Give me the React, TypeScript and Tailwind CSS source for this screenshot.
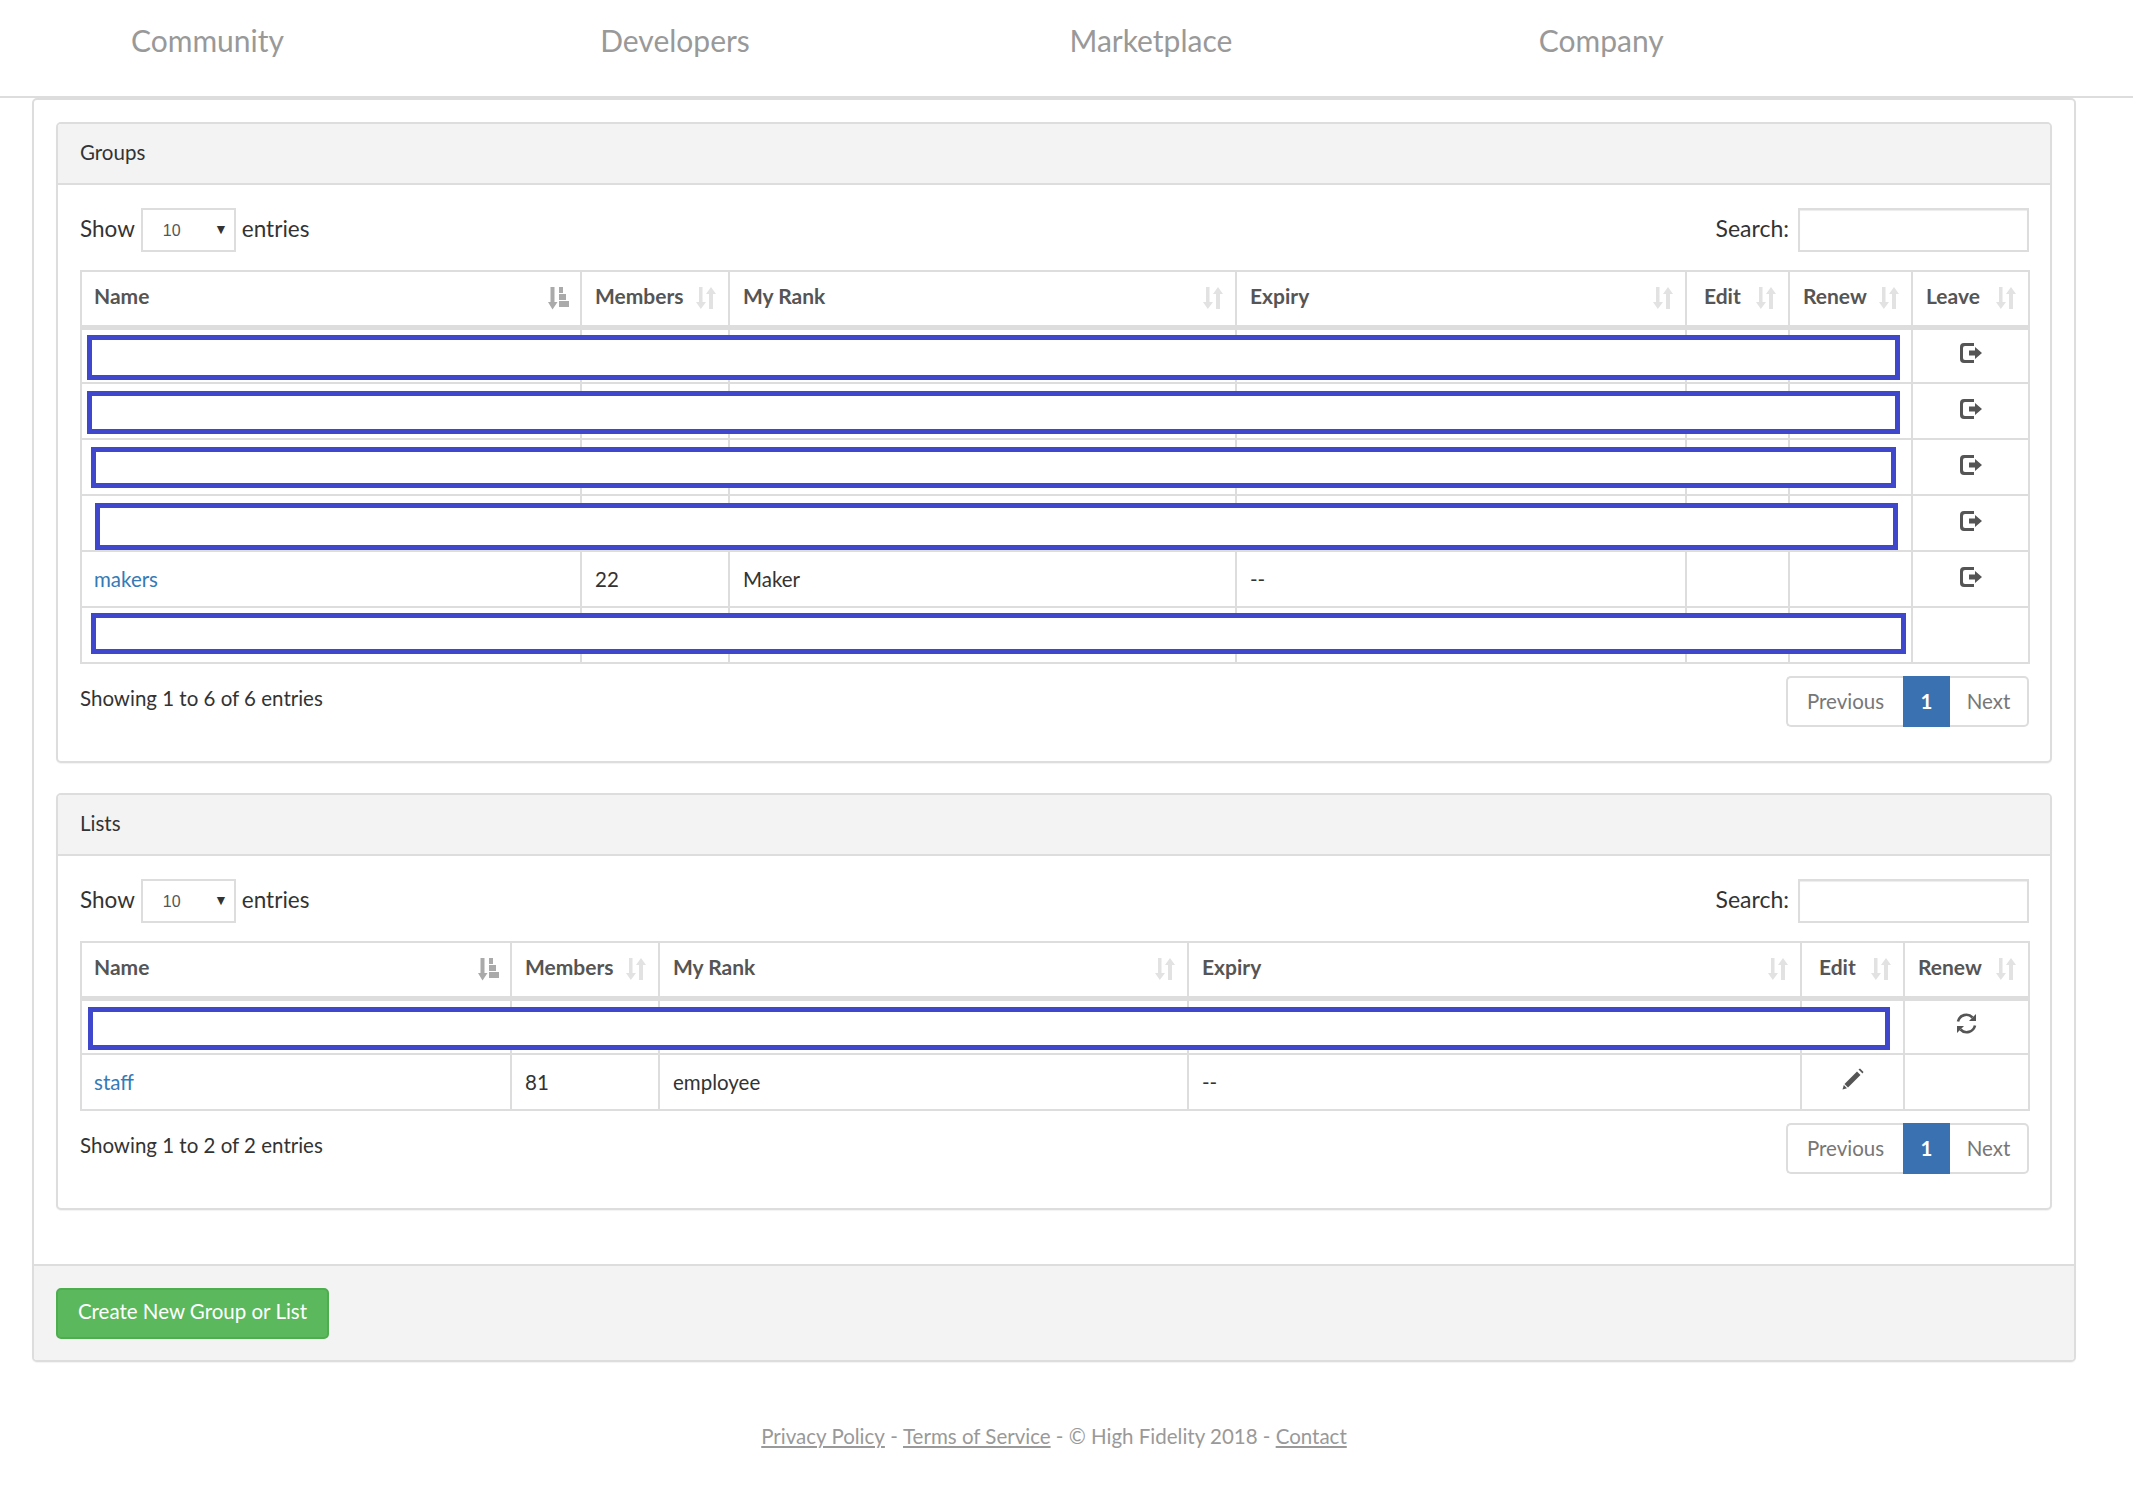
import React from "react";

const font = "font-['Lato','Open_Sans',sans-serif]";

function SortIcon({ active = false }: { active?: boolean }) {
  if (active) {
    return (
      <svg width="22" height="23" viewBox="0 0 22 23" className="-mr-[2px] shrink-0 text-[#aaaaaa]" fill="currentColor">
        <path d="M2.500 0h4v15H9.500l-5 7.500L0 15h2.500z" />
        <path d="M11 0h4v6h-4zM11 7h7v6h-7zM11 14h10v6H11z" />
      </svg>
    );
  }
  return (
    <svg width="20" height="23" viewBox="0 0 20 23" className="shrink-0 text-[#e2e2e2]" fill="currentColor">
      <path d="M3 0h3.500v15H10l-5.200 7L0 15h3z" />
      <path d="M13 22V7H10l5-7 5 7h-3v15z" />
    </svg>
  );
}

function LeaveIcon() {
  return (
    <svg width="23" height="20" viewBox="0 0 23 20" className="mx-auto translate-x-[1px] text-[#555555]" fill="currentColor">
      <path d="M4 0H14v3H5A2 2 0 0 0 3 5v10a2 2 0 0 0 2 2H14v3H4A4 4 0 0 1 0 16V4A4 4 0 0 1 4 0z" />
      <path d="M9 7.500h6V4l7 6-7 6v-3.500H9z" />
    </svg>
  );
}

function RefreshIcon() {
  return (
    <svg width="21" height="21" viewBox="0 0 21 21" className="mx-auto text-[#555555]" fill="none" stroke="currentColor" strokeWidth="2.600">
      <path d="M2 8.500A8.500 8.500 0 0 1 16.500 4.500" />
      <path d="M19 12.500A8.500 8.500 0 0 1 4.500 16.500" />
      <path d="M20 1v7h-7z" fill="currentColor" stroke="none" />
      <path d="M1 20v-7h7z" fill="currentColor" stroke="none" />
    </svg>
  );
}

function PencilIcon() {
  return (
    <svg width="22" height="22" viewBox="0 0 22 22" className="mx-auto text-[#555555]" fill="currentColor">
      <path d="M16.500 0.500l1.500-1 3.500 3.500-1 1.500z" transform="translate(0 1)" />
      <path d="M15 3.500L18.500 7 6 19.500 2.500 16z" />
      <path d="M1.800 17L5 20.200 0.500 21.500z" />
    </svg>
  );
}

type Row = { name?: string; members?: string; rank?: string; expiry?: string; edit?: boolean; renew?: boolean; leave?: boolean };

function Cell({ children, center = false }: { children?: React.ReactNode; center?: boolean }) {
  return (
    <td className={`h-[56px] border-2 border-[#dddddd] px-[13px] align-middle text-[20.500px] text-[#333333] first:pl-[12px] ${center ? "text-center" : "text-left"}`}>
      {children}
    </td>
  );
}

function DataTable({
  columns,
  rows,
  footer,
  redactions,
}: {
  columns: { label: string; width: number }[];
  rows: Row[];
  footer: string;
  redactions: string[];
}) {
  const hasLeave = columns.some((c) => c.label === "Leave");
  return (
    <div className="pl-[22px] pr-[21px]">
      <div className="flex h-[44px] items-center justify-between text-[22.500px] text-[#333333]">
        <div className="flex items-center">
          <span className="pb-[3px]">Show</span>
          <div className="relative mx-[6px] h-[44px] w-[95px] border-2 border-[#dddddd]">
            <select
              defaultValue="10"
              className="h-full w-full appearance-none bg-white pl-[20px] pt-[2px] font-['Liberation_Sans',sans-serif] text-[16px] text-[#555555] outline-none"
            >
              <option value="10">10</option>
            </select>
            <span className="pointer-events-none absolute right-[6px] top-[8px] text-[14px] leading-[22px] text-[#333333]">▼</span>
          </div>
          <span className="pb-[3px]">entries</span>
        </div>
        <div className="flex items-center">
          <span className="mr-[9px] pb-[3px] text-[23px]">Search:</span>
          <input className="h-[44px] w-[231px] border-2 border-[#dddddd] bg-white shadow-[inset_0_1px_1px_rgba(0,0,0,0.075)] outline-none" />
        </div>
      </div>
      <div className="relative mr-[1px] mt-[18px]">
        <table className="w-full table-fixed border-collapse">
          <colgroup>
            {columns.map((c) => (
              <col key={c.label} style={{ width: c.width }} />
            ))}
          </colgroup>
          <thead>
            <tr>
              {columns.map((c, i) => (
                <th
                  key={c.label}
                  className={`h-[56px] border-2 border-b-[5px] border-[#dddddd] pr-[12px] text-[21px] font-bold text-[#555555] ${i === 0 ? "pl-[12px]" : c.label === "Edit" ? "pl-[17px]" : "pl-[13px]"}`}
                >
                  <div className="flex items-center justify-between">
                    <span className="pb-[5px]">{c.label}</span>
                    <SortIcon active={i === 0} />
                  </div>
                </th>
              ))}
            </tr>
          </thead>
          <tbody>
            {rows.map((r, i) => (
              <tr key={i}>
                <Cell>{r.name && <a className="text-[#337ab7]">{r.name}</a>}</Cell>
                <Cell>{r.members}</Cell>
                <Cell>{r.rank}</Cell>
                <Cell>{r.expiry}</Cell>
                <Cell center>{r.edit && <div className="-mt-[6px]"><PencilIcon /></div>}</Cell>
                <Cell center>{r.renew && <div className="-mt-[6px]"><RefreshIcon /></div>}</Cell>
                {hasLeave && <Cell center>{r.leave && <div className="-mt-[5px]"><LeaveIcon /></div>}</Cell>}
              </tr>
            ))}
          </tbody>
        </table>
        {redactions.map((cls) => (
          <div key={cls} className={`absolute border-[5px] border-[#3f48cc] bg-white ${cls}`} />
        ))}
      </div>
      <div className="mt-[12px] flex items-start justify-between">
        <div className="pt-[7px] text-[20.500px] text-[#333333]">{footer}</div>
        <div className="flex h-[51px] text-[20.500px]">
          <a className="flex w-[117px] items-center justify-center rounded-l-[5px] border-2 border-r-0 border-[#dddddd] bg-white pb-[1px] text-[#777777]">Previous</a>
          <a className="flex w-[47px] items-center justify-center bg-[#3a72b1] pb-[1px] font-bold text-white">1</a>
          <a className="flex w-[79px] items-center justify-center rounded-r-[5px] border-2 border-l-0 border-[#dddddd] bg-white pb-[1px] text-[#777777]">Next</a>
        </div>
      </div>
    </div>
  );
}

function Panel({ title, children, bottom }: { title: string; children: React.ReactNode; bottom: string }) {
  return (
    <section className={`rounded-[5px] border-2 border-[#dddddd] bg-white shadow-[0_1px_1px_rgba(0,0,0,0.05)] ${bottom}`}>
      <div className="flex h-[61px] items-center rounded-t-[3px] border-b-2 border-[#dddddd] bg-[#f3f3f3] px-[22px] pb-[3px] text-[20.500px] text-[#333333]">{title}</div>
      <div className="pt-[23px]">{children}</div>
    </section>
  );
}

export default function App() {
  const links = ["Community", "Developers", "Marketplace", "Company"];
  return (
    <div className={`min-h-[1493px] bg-white ${font}`}>
      <header className="flex h-[98px] items-center border-b-2 border-[#dddddd] pb-[16px] pl-[131px]">
        {links.map((l) => (
          <a key={l} className="w-[469.250px] text-[30px] text-[#999999]">{l}</a>
        ))}
      </header>
      <main className="ml-[32px] w-[2044px] rounded-[5px] border-2 border-[#dddddd] bg-white shadow-[0_1px_1px_rgba(0,0,0,0.05)]">
        <div className="px-[22px] pb-[54px] pt-[22px]">
          <Panel title="Groups" bottom="pb-[34px]">
            <DataTable
              footer="Showing 1 to 6 of 6 entries"
              columns={[
                { label: "Name", width: 500 },
                { label: "Members", width: 148 },
                { label: "My Rank", width: 507 },
                { label: "Expiry", width: 450 },
                { label: "Edit", width: 103 },
                { label: "Renew", width: 123 },
                { label: "Leave", width: 117 },
              ]}
              rows={[
                { leave: true },
                { leave: true },
                { leave: true },
                { leave: true },
                { name: "makers", members: "22", rank: "Maker", expiry: "--", leave: true },
                {},
              ]}
              redactions={[
                "left-[7px] top-[65px] h-[45px] w-[1813px]",
                "left-[7px] top-[121px] h-[43px] w-[1813px]",
                "left-[11px] top-[177px] h-[41px] w-[1805px]",
                "left-[15px] top-[233px] h-[47px] w-[1803px]",
                "left-[11px] top-[343px] h-[41px] w-[1815px]",
              ]}
            />
          </Panel>
          <div className="h-[30px]" />
          <Panel title="Lists" bottom="pb-[34px]">
            <DataTable
              footer="Showing 1 to 2 of 2 entries"
              columns={[
                { label: "Name", width: 430 },
                { label: "Members", width: 148 },
                { label: "My Rank", width: 529 },
                { label: "Expiry", width: 613 },
                { label: "Edit", width: 103 },
                { label: "Renew", width: 125 },
              ]}
              rows={[
                { renew: true },
                { name: "staff", members: "81", rank: "employee", expiry: "--", edit: true },
              ]}
              redactions={["left-[8px] top-[66px] h-[43px] w-[1802px]"]}
            />
          </Panel>
        </div>
        <div className="flex h-[96px] items-center rounded-b-[3px] border-t-2 border-[#dddddd] bg-[#f3f3f3] px-[22px]">
          <button className="h-[51px] w-[273px] rounded-[5px] border-2 border-[#4cae4c] bg-[#5cb85c] pb-[3px] text-[20.500px] text-white">Create New Group or List</button>
        </div>
      </main>
      <footer className="mt-[59px] flex justify-center pr-[25px] text-[20.500px] text-[#999999]">
        <a className="underline">Privacy Policy</a>
        <span className="whitespace-pre"> - </span>
        <a className="underline">Terms of Service</a>
        <span className="whitespace-pre"> - © High Fidelity 2018 - </span>
        <a className="underline">Contact</a>
      </footer>
    </div>
  );
}
